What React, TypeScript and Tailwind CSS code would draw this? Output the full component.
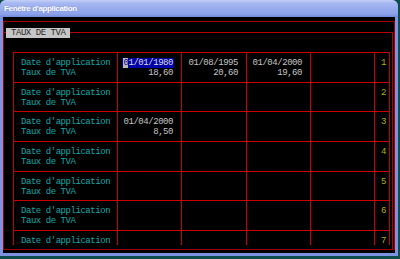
import React from "react";

type Row = { dates?: string[]; rates?: string[] };

const rows: Row[] = [
  { dates: ["01/01/1980", "01/08/1995", "01/04/2000"], rates: ["18,60", "20,60", "19,60"] },
  {},
  { dates: ["01/04/2000"], rates: ["8,50"] },
  {},
  {},
  {},
  {},
];

const mono = "font-['Liberation_Mono','DejaVu_Sans_Mono',monospace] text-[9px] leading-[9.5px] tracking-[-0.45px]";

export default function App() {
  return (
    <div className="w-[400px] h-[259px] bg-[#0d4d4b] overflow-hidden">
      <div className="w-[398px] h-[256px] flex flex-col rounded-t-[6px] overflow-hidden bg-[#7d92e0]">
        <div className="h-[17px] shrink-0 flex items-center pl-[4px] pt-[1px] bg-[linear-gradient(#c4d0f7_0px,#a8b8f1_3px,#96aaed_9px,#8ca2e9_14px,#7189dc_17px)] text-white text-[8px] font-bold font-['Liberation_Sans',Arial,sans-serif] tracking-[-0.35px] [text-shadow:0_0_1px_rgba(80,90,160,0.5)]">
          Fenêtre d'application
        </div>
        <div className="flex-1 mx-[3px] mb-[3px] bg-black flex flex-col">
          <div className="flex-1 mt-[4px] mb-[3px] border border-[#a00000] flex flex-col">
            <div className="relative flex-1 mt-[10px] mr-[1px] border-t border-r border-[#b80000] flex flex-col">
              <div className={`absolute left-[2px] top-[-5px] w-[64px] h-[10px] bg-[#c6c6c6] text-[#262626] pl-[5px] ${mono} leading-[10px]`}>
                TAUX DE TVA
              </div>
              <div className="mt-[19px] ml-[9px] w-[377px] h-[193px] overflow-hidden">
                <div className={`grid grid-cols-[104px_64px_65px_64px_64px_15px] grid-rows-[30px_29px_30px_30px_29px_30px_30px] border-l border-t border-[#c80000] ${mono}`}>
                  {rows.map((r, i) => (
                    <React.Fragment key={i}>
                      <div className="border-r border-b border-[#c80000] pl-[7px] pt-[6px] text-[#12a8a8]">
                        <div>Date d'application</div>
                        {i < 6 ? <div>Taux de TVA</div> : null}
                      </div>
                      {[0, 1, 2, 3].map((c) => (
                        <div key={c} className="border-r border-b border-[#c80000] pr-[8px] pt-[6px] text-right text-[#c4c4c4]">
                          {r.dates && r.dates[c] ? (
                            <>
                              <div>
                                {i === 0 && c === 0 ? (
                                  <span className="bg-[#0000a8] text-[#dcdcdc] px-[1px] mr-[-1px]">
                                    <span className="bg-[#bcbca4] text-[#0000a8]">0</span>1/01/1980
                                  </span>
                                ) : (
                                  r.dates[c]
                                )}
                              </div>
                              <div>{r.rates![c]}</div>
                            </>
                          ) : null}
                        </div>
                      ))}
                      <div className="border-r border-b border-[#c80000] pr-[3px] pt-[6px] text-right text-[#b0b000]">
                        {i + 1}
                      </div>
                    </React.Fragment>
                  ))}
                </div>
              </div>
            </div>
          </div>
        </div>
      </div>
    </div>
  );
}
